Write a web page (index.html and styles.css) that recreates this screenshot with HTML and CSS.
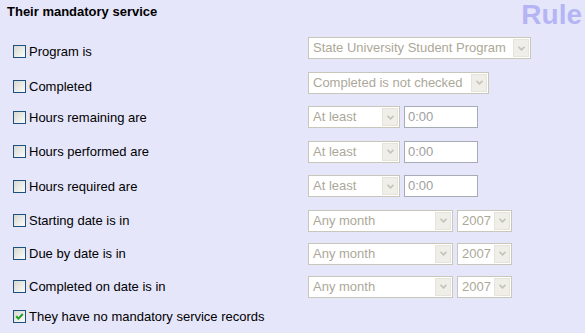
FILE: index.html
```html
<!DOCTYPE html>
<html lang="en">
<head>
  <meta charset="UTF-8">
  <title>Their mandatory service</title>
  <link rel="stylesheet" href="styles.css">
</head>
<body>
  <div class="header">
    <h2>Their mandatory service</h2>
    <div class="rule">Rule</div>
  </div>

  <div class="rules">
    <div class="row bottom">
      <label class="opt"><span class="box"></span>Program is</label>
      <div class="select w-program"><span class="val">State University Student Program</span><span class="arrow"><svg width="7" height="5" viewBox="0 0 7 5"><path d="M0.5 0.8 L3.5 3.8 L6.5 0.8" /></svg></span></div>
    </div>
    <div class="row bottom">
      <label class="opt"><span class="box"></span>Completed</label>
      <div class="select w-completed"><span class="val">Completed is not checked</span><span class="arrow"><svg width="7" height="5" viewBox="0 0 7 5"><path d="M0.5 0.8 L3.5 3.8 L6.5 0.8" /></svg></span></div>
    </div>
    <div class="row">
      <label class="opt"><span class="box"></span>Hours remaining are</label>
      <div class="select w-least"><span class="val">At least</span><span class="arrow"><svg width="7" height="5" viewBox="0 0 7 5"><path d="M0.5 0.8 L3.5 3.8 L6.5 0.8" /></svg></span></div>
      <div class="text">0:00</div>
    </div>
    <div class="row">
      <label class="opt"><span class="box"></span>Hours performed are</label>
      <div class="select w-least"><span class="val">At least</span><span class="arrow"><svg width="7" height="5" viewBox="0 0 7 5"><path d="M0.5 0.8 L3.5 3.8 L6.5 0.8" /></svg></span></div>
      <div class="text">0:00</div>
    </div>
    <div class="row">
      <label class="opt"><span class="box"></span>Hours required are</label>
      <div class="select w-least"><span class="val">At least</span><span class="arrow"><svg width="7" height="5" viewBox="0 0 7 5"><path d="M0.5 0.8 L3.5 3.8 L6.5 0.8" /></svg></span></div>
      <div class="text">0:00</div>
    </div>
    <div class="row date">
      <label class="opt"><span class="box"></span>Starting date is in</label>
      <div class="select w-month"><span class="val">Any month</span><span class="arrow"><svg width="7" height="5" viewBox="0 0 7 5"><path d="M0.5 0.8 L3.5 3.8 L6.5 0.8" /></svg></span></div>
      <div class="select w-year"><span class="val">2007</span><span class="arrow"><svg width="7" height="5" viewBox="0 0 7 5"><path d="M0.5 0.8 L3.5 3.8 L6.5 0.8" /></svg></span></div>
    </div>
    <div class="row date">
      <label class="opt"><span class="box"></span>Due by date is in</label>
      <div class="select w-month"><span class="val">Any month</span><span class="arrow"><svg width="7" height="5" viewBox="0 0 7 5"><path d="M0.5 0.8 L3.5 3.8 L6.5 0.8" /></svg></span></div>
      <div class="select w-year"><span class="val">2007</span><span class="arrow"><svg width="7" height="5" viewBox="0 0 7 5"><path d="M0.5 0.8 L3.5 3.8 L6.5 0.8" /></svg></span></div>
    </div>
    <div class="row date">
      <label class="opt"><span class="box"></span>Completed on date is in</label>
      <div class="select w-month"><span class="val">Any month</span><span class="arrow"><svg width="7" height="5" viewBox="0 0 7 5"><path d="M0.5 0.8 L3.5 3.8 L6.5 0.8" /></svg></span></div>
      <div class="select w-year"><span class="val">2007</span><span class="arrow"><svg width="7" height="5" viewBox="0 0 7 5"><path d="M0.5 0.8 L3.5 3.8 L6.5 0.8" /></svg></span></div>
    </div>
    <div class="row last">
      <label class="opt"><span class="box checked"><svg width="11" height="11" viewBox="0 0 11 11"><path d="M2.2 5.2 L4.4 7.6 L8.8 3" /></svg></span>They have no mandatory service records</label>
    </div>
  </div>
</body>
</html>
```

FILE: styles.css
```css
body {
  margin: 0;
  background: #e6e6fa;
  font-family: "Liberation Sans", Arial, sans-serif;
  font-size: 13px;
  color: #000;
}
.header {
  height: 37px;
  display: flex;
  justify-content: space-between;
  align-items: flex-start;
  padding: 0 3px 0 7px;
}
.header h2 {
  margin: 0;
  padding-top: 4px;
  font-size: 13px;
  line-height: 15px;
  font-weight: bold;
}
.rule {
  color: #b5b5f6;
  font-size: 28px;
  line-height: 30px;
  font-weight: bold;
  margin-top: 0;
}
.rules {
  padding-left: 13px;
}
.row {
  display: flex;
  align-items: center;
  gap: 4px;
  height: 22px;
  margin-bottom: 12.6px;
}
.row.bottom {
  align-items: flex-end;
}
.row.date {
  margin-bottom: 11px;
}
.row.last {
  margin-top: 3px;
  height: 15px;
}
.opt {
  width: 291px;
  display: flex;
  align-items: center;
  line-height: 15px;
}
.box {
  width: 11px;
  height: 11px;
  border: 1px solid #1c5180;
  background: linear-gradient(135deg, #d8d8d2, #fbfbf9);
  margin-right: 3px;
  flex: none;
  display: flex;
}
.box.checked path {
  fill: none;
  stroke: #21a121;
  stroke-width: 2;
}
.select {
  box-sizing: border-box;
  height: 22px;
  border: 1px solid #c9c7ba;
  background: #fff;
  padding: 1px;
  display: flex;
  align-items: center;
  color: #aca899;
  line-height: 18px;
}
.select .val {
  flex: 1;
  padding-left: 3px;
  white-space: nowrap;
  overflow: hidden;
}
.select .arrow {
  box-sizing: border-box;
  width: 16px;
  height: 18px;
  background: #efeee8;
  border: 1px solid #e6e4da;
  display: flex;
  align-items: center;
  justify-content: center;
}
.select .arrow path {
  fill: none;
  stroke: #c6c4b8;
  stroke-width: 1.8;
}
.w-program { width: 223px; }
.w-completed { width: 181px; }
.w-least { width: 92px; }
.w-month { width: 145px; }
.w-year { width: 55px; }
.text {
  box-sizing: border-box;
  width: 74px;
  height: 22px;
  border: 1px solid #a5acb5;
  background: #fff;
  color: #a0a0a0;
  padding-left: 3px;
  line-height: 20px;
}
```
